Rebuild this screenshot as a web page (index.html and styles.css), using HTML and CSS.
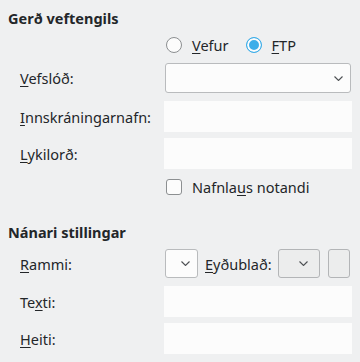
FILE: index.html
```html
<!DOCTYPE html>
<html lang="is">
<head>
    <meta charset="UTF-8">
    <meta name="viewport" content="width=device-width, initial-scale=1.0">
    <title>Veftengill</title>
    <link rel="stylesheet" href="styles.css">
</head>
<body>
    <div class="dialog">
        <h2 class="group-title first">Gerð veftengils</h2>

        <div class="row radio-row">
            <span class="label"></span>
            <label class="choice">
                <span class="radio"></span>
                <span><u>V</u>efur</span>
            </label>
            <label class="choice">
                <span class="radio checked"></span>
                <span><u>F</u>TP</span>
            </label>
        </div>

        <div class="row combo-row">
            <span class="label"><u>V</u>efslóð:</span>
            <div class="combo wide">
                <svg class="chevron" width="9" height="5" viewBox="0 0 9 5"><polyline points="0.5,0.5 4.5,4.5 8.5,0.5" /></svg>
            </div>
        </div>

        <div class="row field-row gap8">
            <span class="label"><u>I</u>nnskráningarnafn:</span>
            <div class="field"></div>
        </div>

        <div class="row field-row">
            <span class="label"><u>L</u>ykilorð:</span>
            <div class="field"></div>
        </div>

        <div class="row check-row">
            <span class="label"></span>
            <label class="choice">
                <span class="checkbox"></span>
                <span>Nafnla<u>u</u>s notandi</span>
            </label>
        </div>

        <h2 class="group-title second">Nánari stillingar</h2>

        <div class="row small-row">
            <span class="label"><u>R</u>ammi:</span>
            <div class="combo small">
                <svg class="chevron" width="9" height="5" viewBox="0 0 9 5"><polyline points="0.5,0.5 4.5,4.5 8.5,0.5" /></svg>
            </div>
            <span class="inline-label"><u>E</u>yðublað:</span>
            <div class="combo medium flat">
                <svg class="chevron" width="9" height="5" viewBox="0 0 9 5"><polyline points="0.5,0.5 4.5,4.5 8.5,0.5" /></svg>
            </div>
            <div class="tool-button"></div>
        </div>

        <div class="row field-row gap8">
            <span class="label">Te<u>x</u>ti:</span>
            <div class="field"></div>
        </div>

        <div class="row field-row">
            <span class="label"><u>H</u>eiti:</span>
            <div class="field"></div>
        </div>
    </div>
</body>
</html>
```

FILE: styles.css
```css
body {
    margin: 0;
    background-color: #eff0f1;
    color: #232629;
    font-family: "Noto Sans", sans-serif;
    font-size: 14.5px;
}

.dialog {
    padding: 0 8px;
}

.group-title {
    font-size: 14.5px;
    font-weight: bold;
    line-height: 20px;
    margin: 0;
}

.group-title.first {
    padding-top: 8px;
}

.group-title.second {
    margin-top: 25px;
}

.row {
    display: flex;
    align-items: center;
    padding-left: 12px;
}

.label {
    width: 144px;
    flex: none;
}

u {
    text-underline-offset: 2px;
}

.radio-row {
    margin-top: 3px;
    height: 28px;
}

.combo-row {
    margin-top: 4px;
    height: 30px;
}

.field-row {
    margin-top: 6px;
    height: 31px;
}

.gap8 {
    margin-top: 8px;
}

.check-row {
    margin-top: 7px;
    height: 21px;
}

.small-row {
    margin-top: 7px;
    height: 29px;
}

.choice {
    display: flex;
    align-items: center;
    gap: 10px;
    margin-left: 2px;
    margin-right: 15px;
}

.radio {
    width: 16px;
    height: 16px;
    box-sizing: border-box;
    border: 1px solid #8c8f91;
    border-radius: 50%;
    background-color: #fcfcfc;
}

.radio.checked {
    border-color: #3daee9;
    background-color: #3daee9;
    box-shadow: inset 0 0 0 2px #fcfcfc;
    border-width: 1.5px;
}

.checkbox {
    width: 16px;
    height: 16px;
    box-sizing: border-box;
    border: 1px solid #8c8f91;
    border-radius: 3px;
    background-color: #fcfcfc;
}

.field {
    flex: 1;
    height: 31px;
    background-color: #fcfcfc;
}

.combo {
    height: 100%;
    box-sizing: border-box;
    border: 1px solid #b9bbbd;
    border-radius: 3px;
    background-color: #fcfcfc;
    display: flex;
    align-items: center;
    justify-content: flex-end;
    padding-right: 7px;
}

.combo.wide {
    flex: 1;
    margin: 0 1px;
}

.combo.small {
    flex: none;
    width: 33px;
    margin-left: 1px;
}

.combo.medium {
    flex: none;
    width: 42px;
    margin-left: 6px;
    padding-right: 11px;
}

.combo.flat,
.tool-button {
    background-color: #eceded;
    border-color: #b3b5b7;
}

.tool-button {
    flex: none;
    width: 22px;
    height: 100%;
    box-sizing: border-box;
    border: 1px solid #b3b5b7;
    border-radius: 3px;
    margin-left: 8px;
}

.inline-label {
    flex: none;
    margin-left: 7px;
}

.chevron polyline {
    fill: none;
    stroke: #4d5053;
    stroke-width: 1.1;
}
```
